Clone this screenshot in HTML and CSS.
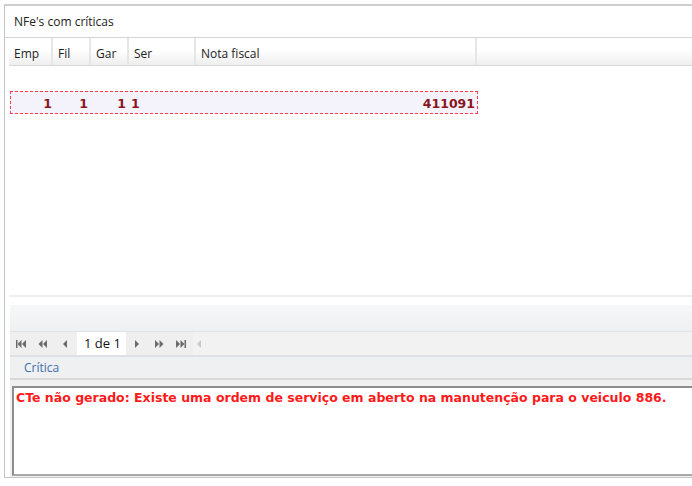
FILE: index.html
```html
<!DOCTYPE html>
<html lang="pt-BR">
<head>
    <meta charset="UTF-8">
    <title>NFe's com críticas</title>
    <link rel="stylesheet" href="styles.css">
</head>
<body>
    <div class="panel">
        <div class="panel-title">NFe's com críticas</div>

        <div class="grid">
            <div class="grid-head">
                <div class="hcell c-emp">Emp</div>
                <div class="hcell c-fil">Fil</div>
                <div class="hcell c-gar">Gar</div>
                <div class="hcell c-ser">Ser</div>
                <div class="hcell c-nota">Nota fiscal</div>
                <div class="hcell c-rest"></div>
            </div>
            <div class="grid-body">
                <div class="grid-row">
                    <div class="cell c-emp num">1</div>
                    <div class="cell c-fil num">1</div>
                    <div class="cell c-gar num">1</div>
                    <div class="cell c-ser">1</div>
                    <div class="cell c-nota num">411091</div>
                </div>
            </div>
        </div>

        <div class="toolbar"></div>

        <div class="pager">
            <!-- first / prev page / prev -->
            <svg class="pg-icon" width="12" height="10" viewBox="0 0 12 10"><rect x="1" y="1" width="1.5" height="8"/><path d="M6.5 1 L2.5 5 L6.5 9 Z"/><path d="M11 1 L7 5 L11 9 Z"/></svg>
            <svg class="pg-icon" width="12" height="10" viewBox="0 0 12 10"><path d="M5.5 1 L1.5 5 L5.5 9 Z"/><path d="M10 1 L6 5 L10 9 Z"/></svg>
            <svg class="pg-icon" width="12" height="10" viewBox="0 0 12 10"><path d="M8 1 L4 5 L8 9 Z"/></svg>
            <div class="pg-count">1 de 1</div>
            <svg class="pg-icon" width="12" height="10" viewBox="0 0 12 10"><path d="M4 1 L8 5 L4 9 Z"/></svg>
            <svg class="pg-icon" width="12" height="10" viewBox="0 0 12 10"><path d="M2 1 L6 5 L2 9 Z"/><path d="M6.5 1 L10.5 5 L6.5 9 Z"/></svg>
            <svg class="pg-icon" width="12" height="10" viewBox="0 0 12 10"><path d="M1 1 L5 5 L1 9 Z"/><path d="M5.5 1 L9.5 5 L5.5 9 Z"/><rect x="9.5" y="1" width="1.5" height="8"/></svg>
            <div class="scroll-track">
                <svg class="scroll-arrow" width="8" height="10" viewBox="0 0 8 10"><path d="M6 1 L2 5 L6 9 Z"/></svg>
            </div>
        </div>

        <div class="critica-head">Crítica</div>
        <div class="critica-wrap">
            <div class="critica-box">CTe não gerado: Existe uma ordem de serviço em aberto na manutenção para o veiculo 886.</div>
        </div>
    </div>
</body>
</html>
```

FILE: styles.css
```css
body {
    margin: 0;
    background: #fff;
    font-family: "Open Sans", "Noto Sans", sans-serif;
    font-size: 12px;
    color: #222;
    overflow: hidden;
}
.panel {
    margin: 4px 0 0 4px;
    width: 700px;
    height: 471px;
    border-top: 2px solid #cfcfcf;
    border-left: 1px solid #c4c4c4;
    border-bottom: 1px solid #c4c4c4;
    display: flex;
    flex-direction: column;
}
.panel-title {
    height: 31px;
    line-height: 31px;
    padding-left: 9px;
    border-bottom: 1px solid #d4d4d4;
}

/* grid */
.grid {
    margin-left: 4px;
    height: 257px;
    border-bottom: 2px solid #efefef;
    display: flex;
    flex-direction: column;
}
.grid-head {
    display: flex;
    height: 27px;
    border-bottom: 1px solid #d8d8d8;
    background: linear-gradient(#ffffff 0%, #ffffff 45%, #eeeeee 100%);
}
.hcell {
    line-height: 31px;
    padding-left: 5px;
    border-right: 2px solid #e6e6e6;
    box-sizing: border-box;
    white-space: nowrap;
}
.c-emp { width: 44px; }
.c-fil { width: 38px; }
.c-gar { width: 38px; }
.c-ser { width: 67px; }
.c-nota { width: 281px; }
.c-rest { flex: 1; border-right: none; }

.grid-body {
    flex: 1;
    padding-top: 25px;
}
.grid-row {
    display: flex;
    width: 466px;
    margin-left: 1px;
    height: 21px;
    border: 1px dashed #ff3a4a;
    background: #f4f3fc;
    font-family: "DejaVu Sans", Verdana, sans-serif;
    font-weight: bold;
    font-size: 12.5px;
    color: #8a1520;
    line-height: 23px;
}
.cell {
    box-sizing: border-box;
    padding: 0 3px;
}
.grid-row .c-emp { width: 42px; padding-right: 1px; }
.grid-row .c-nota { flex: 1; width: auto; padding-right: 2px; }
.grid-row .c-ser { width: 60px; padding-left: 2px; }
.num { text-align: right; }

/* toolbar + pager */
.toolbar {
    margin-top: 8px;
    margin-left: 5px;
    height: 26px;
    background: linear-gradient(#f6f7f8, #eef0f2);
}
.pager {
    margin-left: 5px;
    height: 23px;
    display: flex;
    align-items: center;
    background: #efefef;
    border-top: 1px solid #e2e2e2;
    padding-left: 5px;
}
.pg-icon {
    fill: #6b6b6b;
    margin-right: 10px;
}
.pg-count {
    background: #fff;
    height: 23px;
    line-height: 23px;
    padding: 0 5px 0 7px;
    margin: 0 5px 0 -4px;
    font-size: 13px;
    color: #111;
}
.scroll-track {
    flex: 1;
    height: 23px;
    display: flex;
    align-items: center;
    background: #f2f2f2;
    margin-left: -4px;
}
.scroll-arrow {
    fill: #c8c8c8;
    margin-left: 2px;
}
.critica-head {
    margin-left: 5px;
    height: 21px;
    line-height: 22px;
    padding-left: 14px;
    color: #3d6fa8;
    background: #eef0f2;
    border-top: 2px solid #dde0e4;
    border-bottom: 2px solid #d8d8d8;
}
.critica-wrap {
    margin-left: 5px;
    background: #f0f0f0;
    padding-top: 6px;
    flex: 1;
}
.critica-box {
    margin-left: 2px;
    height: 84px;
    background: #fff;
    border: 2px solid #8d8d8d;
    border-right: none;
    border-bottom-color: #a8a8a8;
    padding: 1px 2px;
    font-family: "DejaVu Sans", Verdana, sans-serif;
    font-weight: bold;
    font-size: 12.5px;
    color: #ff1a1a;
    line-height: 18px;
    white-space: nowrap;
}
```
